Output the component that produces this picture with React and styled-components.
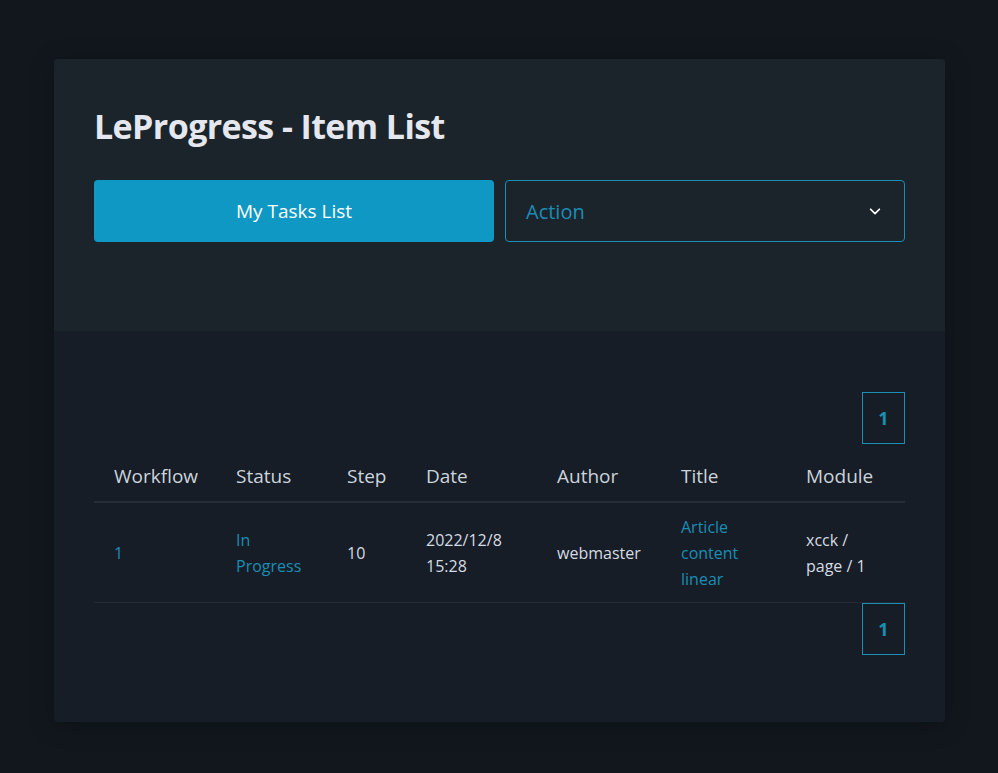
import React from "react";
import styled, { createGlobalStyle } from "styled-components";

const GlobalStyle = createGlobalStyle`
  html, body {
    margin: 0;
    padding: 0;
    background: #12171e;
    font-family: "Open Sans", "Noto Sans", sans-serif;
  }
`;

const columns = [
  { key: "workflow", label: "Workflow", width: 122 },
  { key: "status", label: "Status", width: 111 },
  { key: "step", label: "Step", width: 79 },
  { key: "date", label: "Date", width: 131 },
  { key: "author", label: "Author", width: 124 },
  { key: "title", label: "Title", width: 125 },
  { key: "module", label: "Module", width: 119 },
];

const rows = [
  {
    workflow: "1",
    status: "In Progress",
    step: "10",
    date: "2022/12/8 15:28",
    author: "webmaster",
    title: "Article content linear",
    module: "xcck / page / 1",
  },
];

const linkCols = ["workflow", "status", "title"];

function Pager() {
  return (
    <PagerRow>
      <PageButton>1</PageButton>
    </PagerRow>
  );
}

export default function App() {
  return (
    <>
      <GlobalStyle />
      <Page>
        <Card>
          <TopSection>
            <Title>LeProgress - Item List</Title>
            <Controls>
              <PrimaryButton>My Tasks List</PrimaryButton>
              <SelectBox>
                <SelectText>Action</SelectText>
                <svg width="14" height="14" viewBox="0 0 16 16" fill="none">
                  <path
                    d="M3 6l5 5 5-5"
                    stroke="#ffffff"
                    strokeWidth="2"
                    strokeLinecap="round"
                    strokeLinejoin="round"
                  />
                </svg>
              </SelectBox>
            </Controls>
          </TopSection>
          <BottomSection>
            <Pager />
            <Table>
              <colgroup>
                {columns.map((c) => (
                  <col key={c.key} style={{ width: c.width }} />
                ))}
              </colgroup>
              <thead>
                <tr>
                  {columns.map((c) => (
                    <Th key={c.key}>{c.label}</Th>
                  ))}
                </tr>
              </thead>
              <tbody>
                {rows.map((r, i) => (
                  <tr key={i}>
                    {columns.map((c) => (
                      <Td key={c.key} $link={linkCols.includes(c.key)}>
                        {r[c.key]}
                      </Td>
                    ))}
                  </tr>
                ))}
              </tbody>
            </Table>
            <Pager />
          </BottomSection>
        </Card>
      </Page>
    </>
  );
}

const Page = styled.div`
  min-height: 773px;
  box-sizing: border-box;
  padding: 59px 53px 52px 54px;
`;

const Card = styled.div`
  width: 891px;
  border-radius: 4px;
  overflow: hidden;
  box-shadow: 0 4px 24px rgba(0, 0, 0, 0.25);
`;

const TopSection = styled.div`
  background: #1b232b;
  height: 272px;
  box-sizing: border-box;
  padding: 44px 40px 0;
`;

const Title = styled.h1`
  margin: 0;
  color: #e4e8ee;
  font-size: 34px;
  font-weight: 700;
  line-height: 46px;
  letter-spacing: -0.6px;
`;

const Controls = styled.div`
  display: grid;
  grid-template-columns: minmax(0, 1fr) minmax(0, 1fr);
  column-gap: 11px;
  margin-top: 31px;
`;

const PrimaryButton = styled.div`
  height: 62px;
  border-radius: 4px;
  background: #0f98c4;
  color: #ffffff;
  font-size: 19px;
  display: flex;
  align-items: center;
  justify-content: center;
  cursor: pointer;
`;

const SelectBox = styled.div`
  height: 62px;
  box-sizing: border-box;
  border: 1px solid #1a8fb3;
  border-radius: 4px;
  display: flex;
  align-items: center;
  justify-content: space-between;
  padding: 0 22px 0 20px;
  cursor: pointer;
`;

const SelectText = styled.span`
  color: #1b8db5;
  font-size: 20px;
`;

const BottomSection = styled.div`
  background: #161d26;
  padding: 61px 40px 67px;
`;

const PagerRow = styled.div`
  display: flex;
  justify-content: flex-end;
`;

const PageButton = styled.div`
  width: 43px;
  height: 52px;
  box-sizing: border-box;
  border: 1px solid #1a8fb3;
  color: #1a8fb3;
  font-weight: 700;
  font-size: 18px;
  display: flex;
  align-items: center;
  justify-content: center;
`;

const Table = styled.table`
  width: 811px;
  border-collapse: collapse;
  table-layout: fixed;
`;

const Th = styled.th`
  text-align: left;
  font-weight: 400;
  color: #ccd3db;
  font-size: 19px;
  padding: 19px 0 12px 20px;
  border-bottom: 2px solid #252e38;
  line-height: 26px;
`;

const Td = styled.td`
  color: ${(p) => (p.$link ? "#1b8db5" : "#d5dbe2")};
  font-size: 16px;
  line-height: 26px;
  padding: 11px 20px 10px 20px;
  border-bottom: 1px solid #222b35;
  vertical-align: middle;
`;
